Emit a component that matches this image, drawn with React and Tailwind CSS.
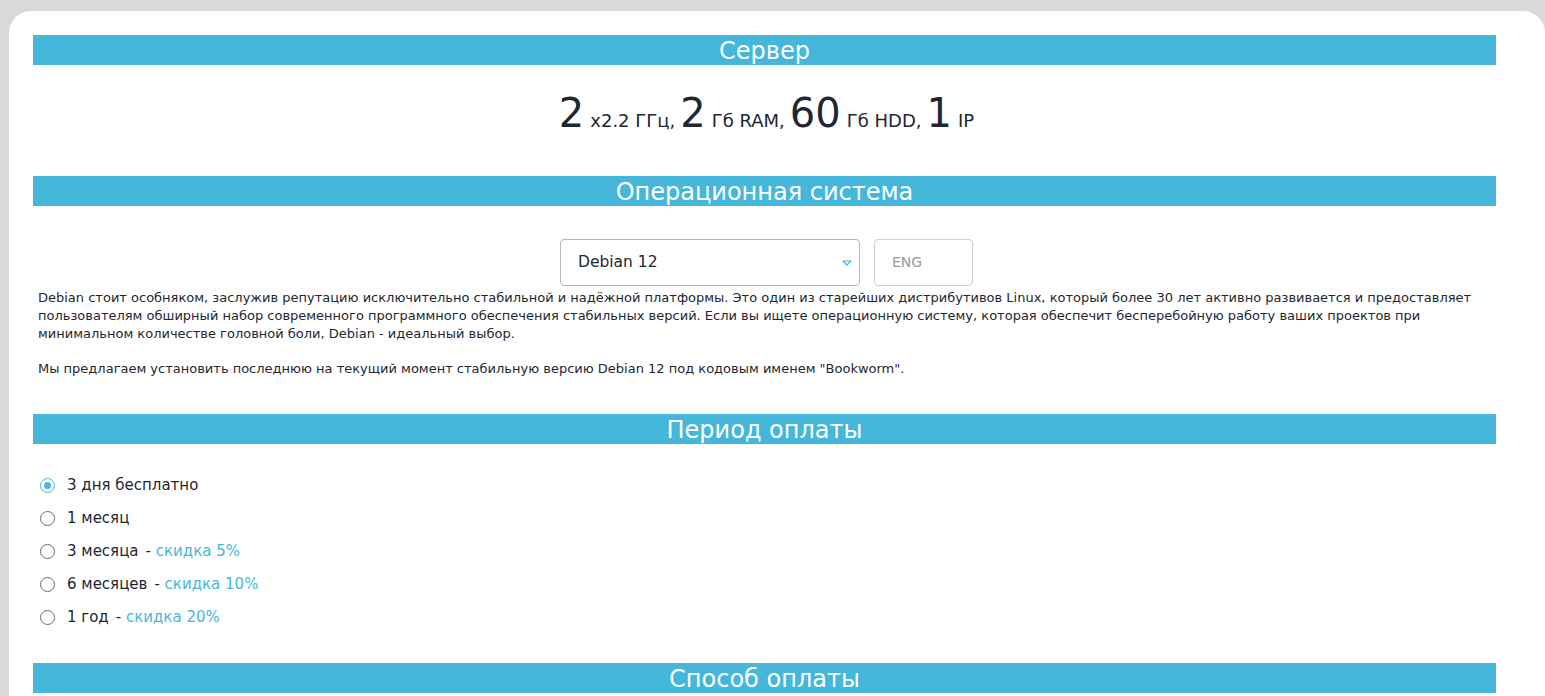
import React from "react";

const Bar = ({ children }) => (
  <div className="bg-[#45b7db] h-[30px] flex items-center justify-center text-white text-[24px] leading-none">
    <span className="mt-[1px]">{children}</span>
  </div>
);

const Radio = ({ checked, label, discount }) => (
  <label className="flex items-center h-[33px]">
    <span
      className={
        "w-[15px] h-[15px] rounded-full border flex items-center justify-center ml-[7px] mr-[12px] " +
        (checked ? "border-[#45b7db]" : "border-[#6b6b6b]")
      }
    >
      {checked && <span className="w-[7px] h-[7px] rounded-full bg-[#45b7db]" />}
    </span>
    <span className="text-[15px] text-[#1e2730]">{label}</span>
    {discount && (
      <span className="text-[15px] text-[#1e2730] ml-[7px]">
        - <span className="text-[#45b7db]">{discount}</span>
      </span>
    )}
  </label>
);

export default function App() {
  return (
    <div
      className="bg-[#d9d9d9] min-h-screen pt-[11px] pl-[9px] overflow-hidden"
      style={{ fontFamily: '"DejaVu Sans", "Liberation Sans", sans-serif' }}
    >
      <div className="bg-white rounded-t-[22px] pt-[24px] pl-[24px] pr-[49px] h-[700px] text-[#1e2730]">
        <Bar>Сервер</Bar>
        <div className="flex items-baseline justify-center mt-[28px] h-[52px] text-[#1e2730] pl-[4px]">
          <span className="text-[40px] leading-none">2</span>
          <span className="text-[18px] ml-[6px]">x2.2 ГГц,</span>
          <span className="text-[40px] leading-none ml-[5px]">2</span>
          <span className="text-[18px] ml-[6px]">Гб RAM,</span>
          <span className="text-[40px] leading-none ml-[5px]">60</span>
          <span className="text-[18px] ml-[6px]">Гб HDD,</span>
          <span className="text-[40px] leading-none ml-[5px]">1</span>
          <span className="text-[18px] ml-[6px]">IP</span>
        </div>
        <div className="mt-[31px]">
          <Bar>Операционная система</Bar>
        </div>
        <div className="flex justify-center gap-[14px] mt-[33px] pl-[4px]">
          <div className="w-[300px] h-[47px] border border-[#b5b5b5] rounded-[4px] flex items-center justify-between pl-[17px] pr-[7px]">
            <span className="text-[15.5px] text-[#1e2730]">Debian 12</span>
            <svg width="10" height="6" viewBox="0 0 10 6">
              <path d="M1 1 L5 5 L9 1 Z" fill="none" stroke="#45b7db" strokeWidth="1.2" strokeLinejoin="round" />
            </svg>
          </div>
          <div className="w-[99px] h-[47px] border border-[#cfcfcf] rounded-[4px] flex items-center pl-[17px] text-[14px] text-[#9a9a9a]">
            ENG
          </div>
        </div>
        <div className="px-[5px] mt-[3px] text-[13px] leading-[18px] text-[#1e2730] text-wrap">
          <p className="text-wrap">
            Debian стоит особняком, заслужив репутацию исключительно стабильной и надёжной платформы. Это один из старейших дистрибутивов Linux, который более 30 лет активно развивается и предоставляет пользователям обширный набор современного программного обеспечения стабильных версий. Если вы ищете операционную систему, которая обеспечит бесперебойную работу ваших проектов при минимальном количестве головной боли, Debian - идеальный выбор.
          </p>
          <p className="mt-[17px]">
            Мы предлагаем установить последнюю на текущий момент стабильную версию Debian 12 под кодовым именем "Bookworm".
          </p>
        </div>
        <div className="mt-[36px]">
          <Bar>Период оплаты</Bar>
        </div>
        <div className="mt-[25px] flex flex-col">
          <Radio checked label="3 дня бесплатно" />
          <Radio label="1 месяц" />
          <Radio label="3 месяца" discount="скидка 5%" />
          <Radio label="6 месяцев" discount="скидка 10%" />
          <Radio label="1 год" discount="скидка 20%" />
        </div>
        <div className="mt-[29px]">
          <Bar>Способ оплаты</Bar>
        </div>
      </div>
    </div>
  );
}
